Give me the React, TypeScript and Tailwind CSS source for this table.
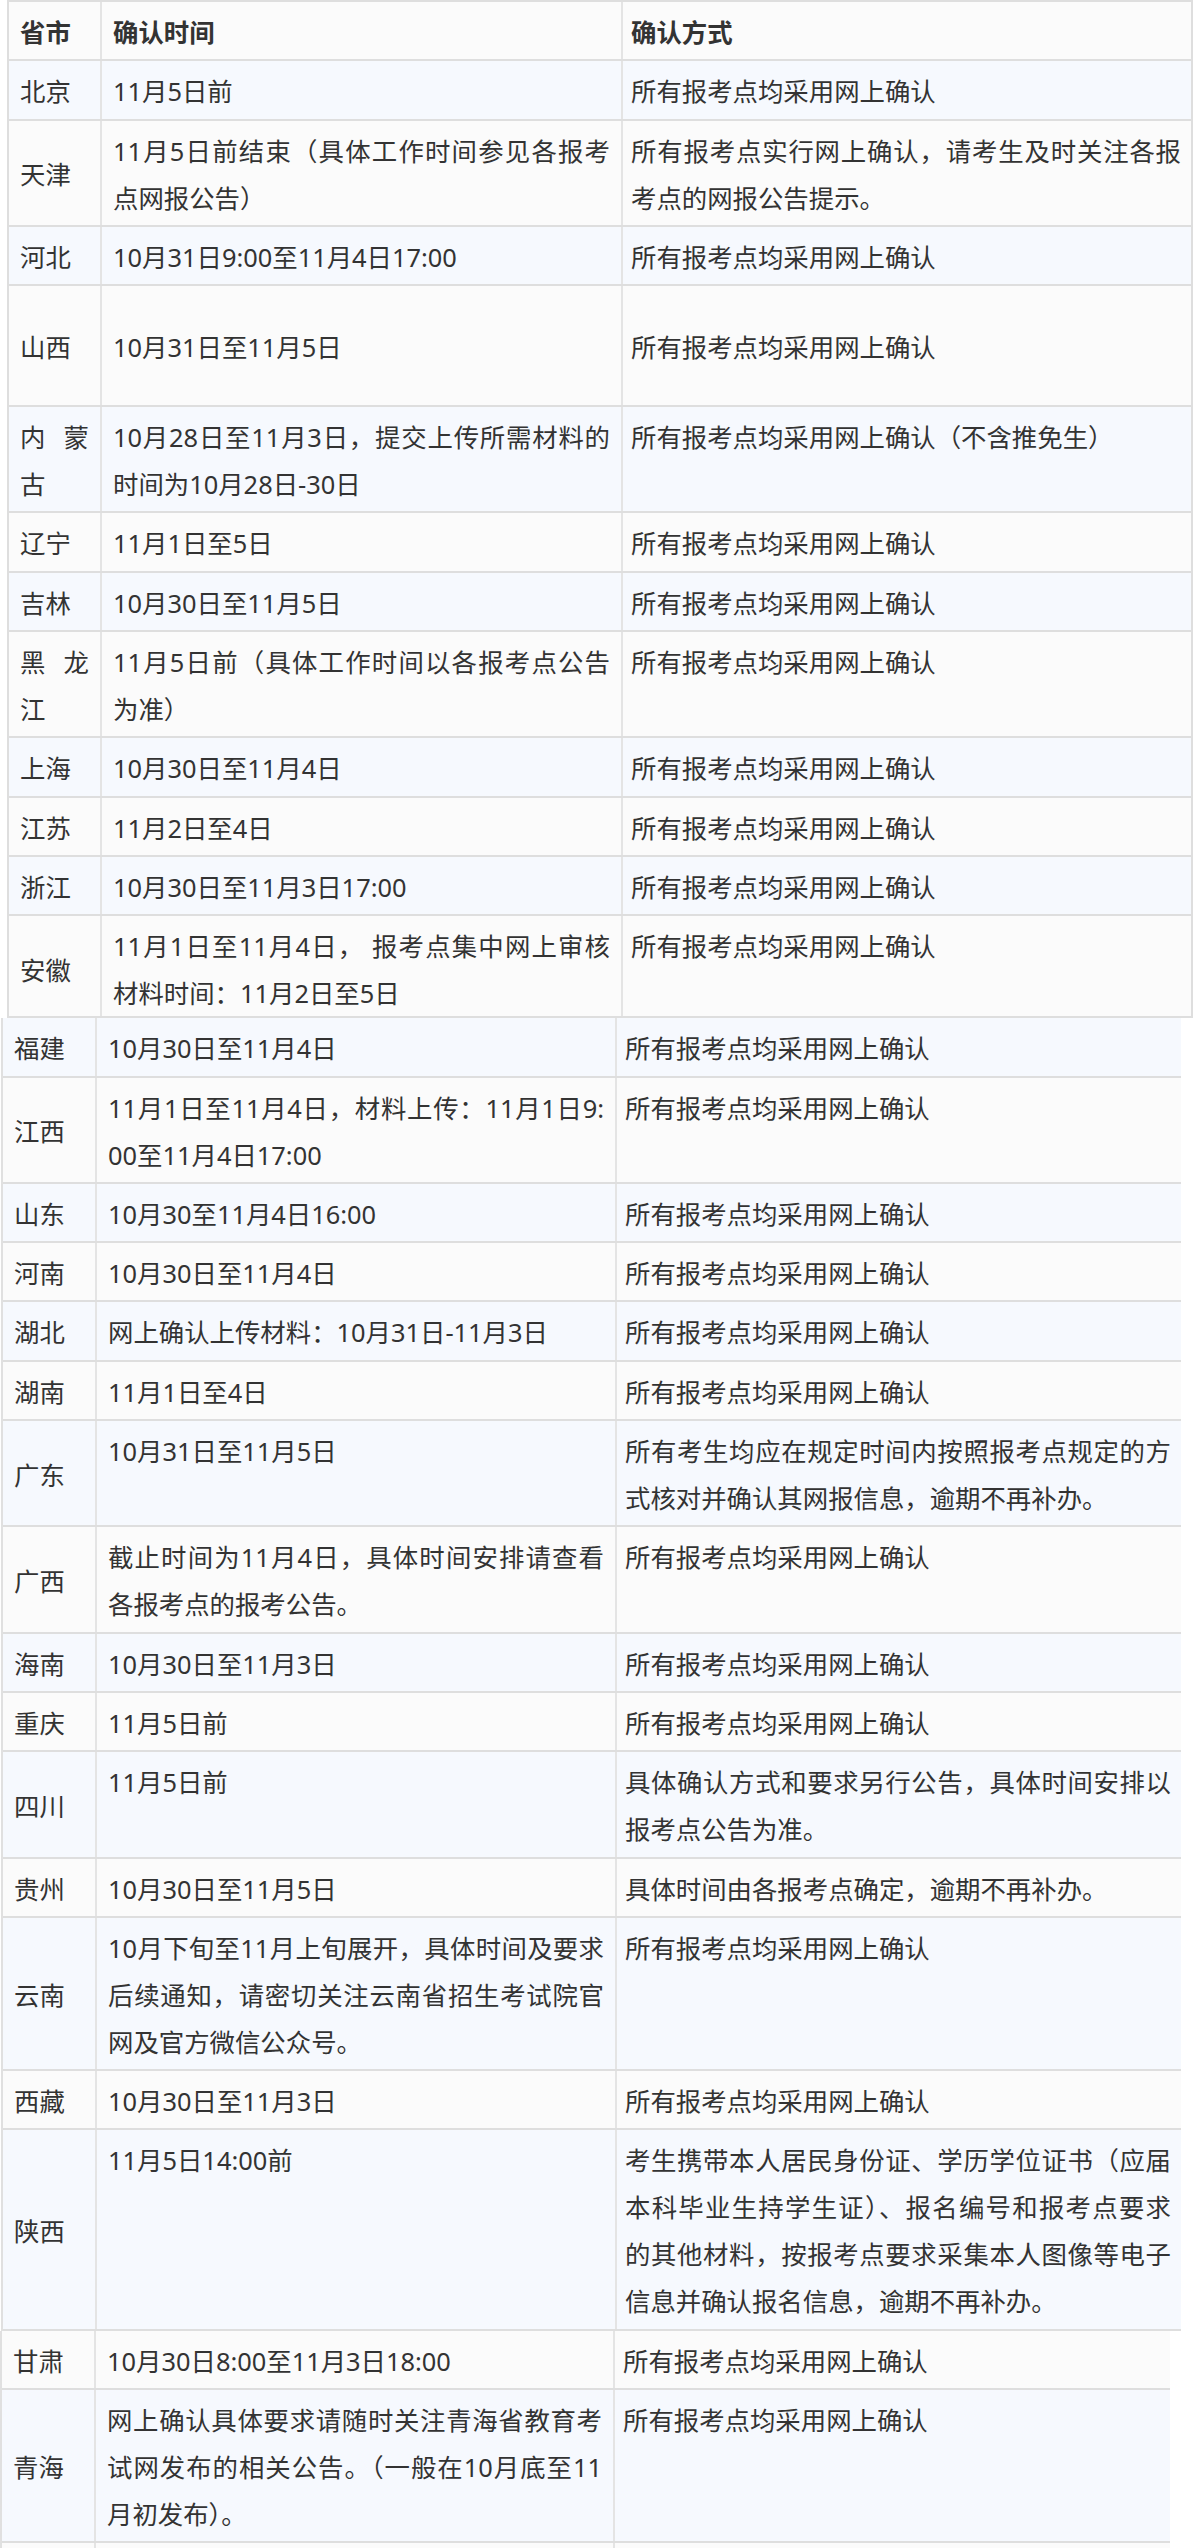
import React from "react";

type Row = {
  p: string[];
  t: string[];
  m: string[];
  h?: string;
  mid?: boolean;
  head?: boolean;
};

const ALL = ["所有报考点均采用网上确认"];

const sectionA: Row[] = [
  { p: ["省市"], t: ["确认时间"], m: ["确认方式"], head: true },
  { p: ["北京"], t: ["11月5日前"], m: ALL },
  {
    p: ["天津"],
    t: ["11月5日前结束（具体工作时间参见各报考", "点网报公告）"],
    m: ["所有报考点实行网上确认，请考生及时关注各报", "考点的网报公告提示。"],
  },
  { p: ["河北"], t: ["10月31日9:00至11月4日17:00"], m: ALL },
  { p: ["山西"], t: ["10月31日至11月5日"], m: ALL, h: "h-[121px]", mid: true },
  {
    p: ["内蒙", "古"],
    t: ["10月28日至11月3日，提交上传所需材料的", "时间为10月28日-30日"],
    m: ["所有报考点均采用网上确认（不含推免生）"],
  },
  { p: ["辽宁"], t: ["11月1日至5日"], m: ALL },
  { p: ["吉林"], t: ["10月30日至11月5日"], m: ALL },
  {
    p: ["黑龙", "江"],
    t: ["11月5日前（具体工作时间以各报考点公告", "为准）"],
    m: ALL,
  },
  { p: ["上海"], t: ["10月30日至11月4日"], m: ALL },
  { p: ["江苏"], t: ["11月2日至4日"], m: ALL },
  { p: ["浙江"], t: ["10月30日至11月3日17:00"], m: ALL },
  {
    p: ["安徽"],
    t: ["11月1日至11月4日， 报考点集中网上审核", "材料时间：11月2日至5日"],
    m: ALL,
    h: "h-[102px] overflow-hidden",
  },
];

const sectionB: Row[] = [
  { p: ["福建"], t: ["10月30日至11月4日"], m: ALL },
  {
    p: ["江西"],
    t: ["11月1日至11月4日，材料上传：11月1日9:", "00至11月4日17:00"],
    m: ALL,
  },
  { p: ["山东"], t: ["10月30至11月4日16:00"], m: ALL },
  { p: ["河南"], t: ["10月30日至11月4日"], m: ALL },
  { p: ["湖北"], t: ["网上确认上传材料：10月31日-11月3日"], m: ALL },
  { p: ["湖南"], t: ["11月1日至4日"], m: ALL },
  {
    p: ["广东"],
    t: ["10月31日至11月5日"],
    m: ["所有考生均应在规定时间内按照报考点规定的方", "式核对并确认其网报信息，逾期不再补办。"],
  },
  {
    p: ["广西"],
    t: ["截止时间为11月4日，具体时间安排请查看", "各报考点的报考公告。"],
    m: ALL,
  },
  { p: ["海南"], t: ["10月30日至11月3日"], m: ALL },
  { p: ["重庆"], t: ["11月5日前"], m: ALL },
  {
    p: ["四川"],
    t: ["11月5日前"],
    m: ["具体确认方式和要求另行公告，具体时间安排以", "报考点公告为准。"],
  },
  { p: ["贵州"], t: ["10月30日至11月5日"], m: ["具体时间由各报考点确定，逾期不再补办。"] },
  {
    p: ["云南"],
    t: [
      "10月下旬至11月上旬展开，具体时间及要求",
      "后续通知，请密切关注云南省招生考试院官",
      "网及官方微信公众号。",
    ],
    m: ALL,
  },
  { p: ["西藏"], t: ["10月30日至11月3日"], m: ALL },
  {
    p: ["陕西"],
    t: ["11月5日14:00前"],
    m: [
      "考生携带本人居民身份证、学历学位证书（应届",
      "本科毕业生持学生证）、报名编号和报考点要求",
      "的其他材料，按报考点要求采集本人图像等电子",
      "信息并确认报名信息，逾期不再补办。",
    ],
  },
];

const sectionC: Row[] = [
  { p: ["甘肃"], t: ["10月30日8:00至11月3日18:00"], m: ALL },
  {
    p: ["青海"],
    t: [
      "网上确认具体要求请随时关注青海省教育考",
      "试网发布的相关公告。（一般在10月底至11",
      "月初发布）。",
    ],
    m: ALL,
  },
  { p: [""], t: [""], m: [""] },
];

function Lines({ lines }: { lines: string[] }) {
  return (
    <>
      {lines.map((l, i) => (
        <div
          key={i}
          className={
            i < lines.length - 1
              ? "whitespace-nowrap text-justify [text-align-last:justify]"
              : "whitespace-nowrap"
          }
        >
          {l || "\u00a0"}
        </div>
      ))}
    </>
  );
}

function Section({
  rows,
  blueFirst,
  wrapClass,
  gridClass,
}: {
  rows: Row[];
  blueFirst: boolean;
  wrapClass: string;
  gridClass: string;
}) {
  return (
    <div className={wrapClass}>
      {rows.map((r, i) => {
        const blue = blueFirst ? i % 2 === 0 : i % 2 === 1;
        const bg = blue ? "bg-[#f6f9fe]" : "bg-[#fbfbfb]";
        const weight = r.head ? "font-bold" : "";
        return (
          <div
            key={i}
            className={`grid ${gridClass} border-b-2 border-[#dedede] ${bg} ${weight} ${r.h ?? ""}`}
          >
            <div className="flex flex-col justify-center px-[11px] pt-[7px] pb-[3.3px]">
              <Lines lines={r.p} />
            </div>
            <div
              className={`flex flex-col ${r.mid ? "justify-center" : ""} border-l-2 border-[#e4e4e4] px-[11px] pt-[7px] pb-[3.3px]`}
            >
              <Lines lines={r.t} />
            </div>
            <div
              className={`flex flex-col ${r.mid ? "justify-center" : ""} border-l-2 border-[#e4e4e4] pl-[8px] pr-[10px] pt-[7px] pb-[3.3px]`}
            >
              <Lines lines={r.m} />
            </div>
          </div>
        );
      })}
    </div>
  );
}

export default function App() {
  return (
    <div className="h-[2548px] overflow-hidden bg-white font-['Noto_Sans','Noto_Sans_CJK_SC',sans-serif] text-[25.4px] leading-[47px] text-[#333333]">
      {/* first block: header to 安徽 */}
      <Section
        rows={sectionA}
        blueFirst={false}
        wrapClass="ml-[7px] w-[1186px] border-t-2 border-l-2 border-r-2 border-[#dedede]"
        gridClass="grid-cols-[91px_521px_570px]"
      />
      {/* second block: 福建 to 陕西 */}
      <Section
        rows={sectionB}
        blueFirst={true}
        wrapClass="ml-[1px] w-[1180px] border-l-2 border-[#e0e0e0]"
        gridClass="grid-cols-[92px_520px_566px]"
      />
      {/* third block: 甘肃 onward */}
      <Section
        rows={sectionC}
        blueFirst={false}
        wrapClass="w-[1170px] border-l-2 border-[#e0e0e0]"
        gridClass="grid-cols-[92px_519px_557px]"
      />
    </div>
  );
}
